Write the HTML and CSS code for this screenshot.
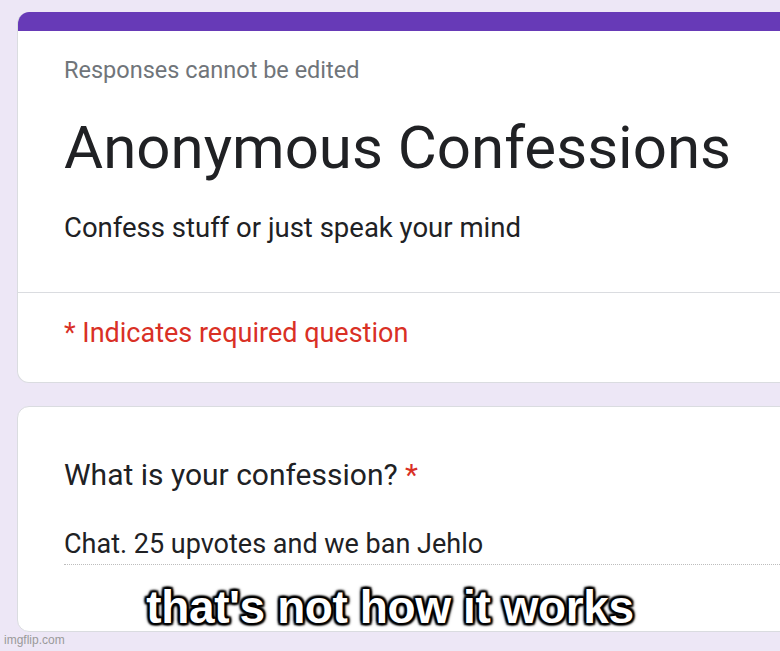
FILE: index.html
```html
<!DOCTYPE html>
<html lang="en">
<head>
  <meta charset="UTF-8" />
  <meta name="viewport" content="width=device-width, initial-scale=1.0" />
  <title>Anonymous Confessions</title>
  <link rel="stylesheet" href="styles.css">
</head>
<body>
  <div class="form-wrap">
    <div class="card header-card">
      <div class="card-top"></div>
      <div class="header-body">
        <div class="notice">Responses cannot be edited</div>
        <h1 class="form-title">Anonymous Confessions</h1>
        <div class="form-desc">Confess stuff or just speak your mind</div>
      </div>
      <div class="required-note">* Indicates required question</div>
    </div>

    <div class="card question-card">
      <div class="question">What is your confession? <span class="star">*</span></div>
      <div class="answer">Chat. 25 upvotes and we ban Jehlo</div>
    </div>
  </div>

  <div class="caption">that's not how it works</div>
  <div class="watermark">imgflip.com</div>
</body>
</html>
```

FILE: styles.css
```css
:root {
  --bg: #ede7f6;
  --purple: #673ab7;
  --text: #202124;
  --muted: #70757a;
  --red: #d93025;
  --line: #dadce0;
}

html, body {
  height: 100%;
}

body {
  margin: 0;
  background: var(--bg);
  font-family: Roboto, "Noto Sans", sans-serif;
  color: var(--text);
  overflow: hidden;
  position: relative;
}

/* form column, runs off the right edge */
.form-wrap {
  display: flex;
  flex-direction: column;
  gap: 23px;
  padding: 12px 0 0 17px;
  width: 900px;
}

.card {
  background: #fff;
  border: 1px solid var(--line);
  border-radius: 12px;
  overflow: hidden;
}

.header-card {
  border-top: none;
}

.card-top {
  height: 19px;
  background: var(--purple);
}

.header-body {
  padding: 25px 46px 47px;
  border-bottom: 1px solid var(--line);
}

.notice {
  font-size: 23.5px;
  color: var(--muted);
  line-height: 28px;
}

.form-title {
  margin: 28px 0 0;
  font-size: 60px;
  font-weight: 400;
  line-height: 72px;
}

.form-desc {
  margin-top: 27px;
  font-size: 27.5px;
  line-height: 34px;
}

.required-note {
  padding: 23px 46px 32px;
  font-size: 27px;
  line-height: 34px;
  color: var(--red);
}

.question-card {
  padding: 49px 0 66px 46px;
}

.question {
  font-size: 30px;
  line-height: 38px;
}

.star {
  color: var(--red);
}

.answer {
  margin-top: 33px;
  font-size: 27px;
  line-height: 34px;
  padding-bottom: 3px;
  border-bottom: 1px dotted #bdbdbd;
}

/* meme caption over the form */
.caption {
  position: absolute;
  left: 0;
  right: 0;
  top: 581px;
  text-align: center;
  font-family: "Liberation Sans", Arial, sans-serif;
  font-weight: 700;
  font-size: 46px;
  letter-spacing: -0.4px;
  line-height: 52px;
  color: #fff;
  text-shadow:
    2px 2px 2px #000, -2px -2px 2px #000,
    2px -2px 2px #000, -2px 2px 2px #000,
    0 2px 2px #000, 0 -2px 2px #000,
    2px 0 2px #000, -2px 0 2px #000,
    0 0 5px #000;
}

.watermark {
  position: absolute;
  left: 4px;
  bottom: 4px;
  font-family: "Liberation Sans", Arial, sans-serif;
  font-size: 12px;
  color: #9a9a9a;
}
```
